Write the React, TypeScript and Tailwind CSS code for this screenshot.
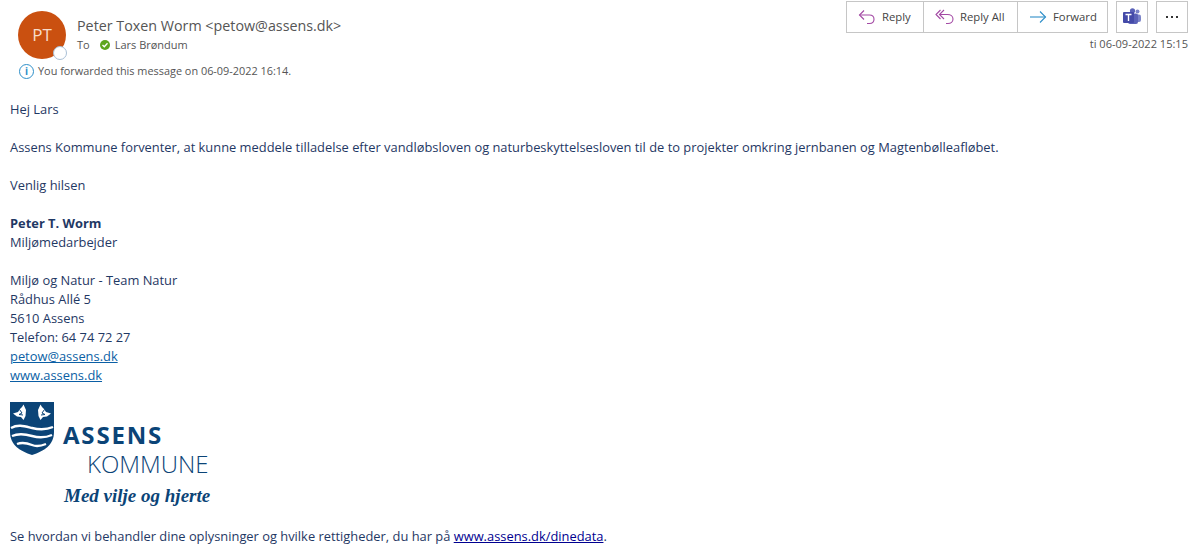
const font = { fontFamily: '"Open Sans", "Noto Sans", sans-serif' };

const ReplyIcon = () => (
  <svg width="18" height="18" viewBox="0 0 18 18" fill="none" stroke="#a349a4" strokeWidth="1.1">
    <path d="M6 2.5 1.5 7 6 11.5" />
    <path d="M1.5 7h10c2.6 0 4.5 1.8 4.5 4.3S14.100 15.500 11.500 15.500H9" />
  </svg>
);

const ReplyAllIcon = () => (
  <svg width="20" height="18" viewBox="0 0 20 18" fill="none" stroke="#a349a4" strokeWidth="1.1">
    <path d="M5.500 2 1 6.500 5.500 11" />
    <path d="M9 2 4.500 6.500 9 11" />
    <path d="M4.500 6.500h8c3 0 5.500 1.800 5.500 4.500s-2.200 4.500-5 4.500H11" />
  </svg>
);

const ForwardIcon = () => (
  <svg width="18" height="14" viewBox="0 0 18 14" fill="none" stroke="#2e8fc9" strokeWidth="1.1">
    <path d="M1 7h15.500" />
    <path d="M11 1.500 16.500 7 11 12.500" />
  </svg>
);

const TeamsIcon = () => (
  <svg width="20" height="20" viewBox="0 0 20 20">
    <circle cx="15.500" cy="4.500" r="2" fill="#7b83c9" />
    <rect x="12" y="7.500" width="7" height="7.500" rx="2" fill="#7b83c9" />
    <circle cx="10.500" cy="3.800" r="2.600" fill="#5b62b8" />
    <rect x="6" y="6.500" width="10" height="10.500" rx="2" fill="#5b62b8" />
    <rect x="1" y="5" width="11" height="11" rx="1" fill="#444aa8" />
    <path d="M3.500 7.500h6M6.500 7.500v6.500" stroke="#fff" strokeWidth="1.400" fill="none" />
  </svg>
);

// water lily in the shield, mirrored for the right side
const Flower = () => (
  <g>
    <path d="M3 12.500 8 11l2-3 2-2 1.500-2.500L16 9l-.5 6-2 4-2.500-3-4-.5z" fill="#fff" />
    <path d="M9.500 8.500l2.500 3.500-3 1.500 4 .5" stroke="#0b4477" strokeWidth="1" fill="none" />
  </g>
);

const Shield = () => (
  <svg width="44" height="54" viewBox="0 0 44 54">
    <path d="M0 1h44v30c0 13-10 19-22 23C10 50 0 44 0 31z" fill="#0b4477" />
    <Flower />
    <g transform="translate(44 0) scale(-1 1)">
      <Flower />
    </g>
    <g fill="none" stroke="#fff" strokeWidth="2.400">
      <path d="M1 27c7-4 13-2 21 0s14 2 21-1" />
      <path d="M2 35c7-3 13-2 20 0s13 2 20-1" />
      <path d="M7 43c5-2 10-1 15 1s9 1 14-1" />
    </g>
  </svg>
);

const ActionButton = ({ icon, label, wide, gap }: { icon: React.ReactNode; label: string; wide: string; gap: string }) => (
  <button className={`flex h-[31px] items-center border-r border-[#c6c6c6] pb-[1px] pl-[11px] text-[11.300px] text-[#444] last:border-r-0 ${gap} ${wide}`}>
    {icon}
    <span>{label}</span>
  </button>
);

export default function App() {
  return (
    <div className="relative h-[559px] w-[1190px] overflow-hidden bg-white text-[#1f3864]" style={font}>
      <header className="flex justify-between">
        <div className="pl-[18px] pt-[11px]">
          <div className="flex">
            <div className="relative flex h-[48px] w-[48px] items-center justify-center rounded-full bg-[#ca5010] text-[17px] text-[#f7dccb]">
              PT
              <span className="absolute bottom-[-1px] right-[-1px] h-[14px] w-[14px] rounded-full border border-[#a9bfd6] bg-white" />
            </div>
            <div className="ml-[11px]">
              <p className="mt-[5px] text-[14.300px] leading-[20px] text-[#555]">Peter Toxen Worm &lt;petow@assens.dk&gt;</p>
              <div className="mt-[1px] flex items-center text-[11px] leading-[16px] text-[#555]">
                <span>To</span>
                <span className="ml-[10px] flex h-[10px] w-[10px] items-center justify-center rounded-full bg-[#5da51e]">
                  <svg width="8" height="8" viewBox="0 0 8 8" fill="none" stroke="#fff" strokeWidth="1.300"><path d="M1.500 4 3.300 5.800 6.500 2.300" /></svg>
                </span>
                <span className="ml-[5px]">Lars Brøndum</span>
              </div>
            </div>
          </div>
          <div className="mt-[4px] flex items-center text-[10.900px] leading-[16px] text-[#555]">
            <span className="ml-[1px] flex h-[15px] w-[15px] items-center justify-center rounded-full border border-[#2e8fc9] text-[10px] font-bold text-[#2e8fc9]">i</span>
            <span className="ml-[4px]">You forwarded this message on 06-09-2022 16:14.</span>
          </div>
        </div>
        <div className="flex flex-col items-end pr-[2px] pt-[1px]">
          <div className="flex items-start">
            <div className="flex h-[32px] border border-[#c6c6c6]">
              <ActionButton icon={<ReplyIcon />} label="Reply" wide="w-[77px]" gap="gap-[6px]" />
              <ActionButton icon={<ReplyAllIcon />} label="Reply All" wide="w-[94px]" gap="gap-[5px]" />
              <ActionButton icon={<ForwardIcon />} label="Forward" wide="w-[89px]" gap="gap-[6px]" />
            </div>
            <div className="ml-[8px] flex h-[32px] w-[32px] items-center justify-center border border-[#c6c6c6]"><TeamsIcon /></div>
            <div className="ml-[8px] flex h-[32px] w-[32px] items-center justify-center gap-[3px] border border-[#c6c6c6]">
              <span className="h-[2px] w-[2px] bg-[#333]" />
              <span className="h-[2px] w-[2px] bg-[#333]" />
              <span className="h-[2px] w-[2px] bg-[#333]" />
            </div>
          </div>
          <p className="mt-[3px] text-[11.050px] leading-[16px] text-[#555]">ti 06-09-2022 15:15</p>
        </div>
      </header>

      <main className="absolute left-[10px] top-[100px] text-[12.880px] leading-[19px]">
        <p>Hej Lars</p>
        <p className="mt-[19px] whitespace-nowrap">Assens Kommune forventer, at kunne meddele tilladelse efter vandløbsloven og naturbeskyttelsesloven til de to projekter omkring jernbanen og Magtenbølleafløbet.</p>
        <p className="mt-[19px]">Venlig hilsen</p>
        <p className="mt-[19px] font-bold">Peter T. Worm</p>
        <p>Miljømedarbejder</p>
        <p className="mt-[19px]">Miljø og Natur - Team Natur</p>
        <p>Rådhus Allé 5</p>
        <p>5610 Assens</p>
        <p>Telefon: 64 74 72 27</p>
        <p className="text-[#0b5fa5] underline">petow@assens.dk</p>
        <p className="text-[#0b5fa5] underline">www.assens.dk</p>

        <div className="relative mt-[16px] h-[109px] w-[210px]">
          <Shield />
          <span className="absolute left-[53px] top-[20px] text-[24px] font-bold leading-[28px] tracking-[1.800px] text-[#0b4477]">ASSENS</span>
          <span className="absolute left-[77px] top-[48px] text-[24px] font-light leading-[30px] text-[#0b4477]">KOMMUNE</span>
          <span className="absolute left-[54px] top-[85px] text-[19px] font-bold italic leading-[20px] text-[#0b4477]" style={{ fontFamily: '"Liberation Serif", serif' }}>Med vilje og hjerte</span>
        </div>
        <p className="mt-[17px]">Se hvordan vi behandler dine oplysninger og hvilke rettigheder, du har på <span className="text-[#000090] underline">www.assens.dk/dinedata</span>.</p>
      </main>
    </div>
  );
}
